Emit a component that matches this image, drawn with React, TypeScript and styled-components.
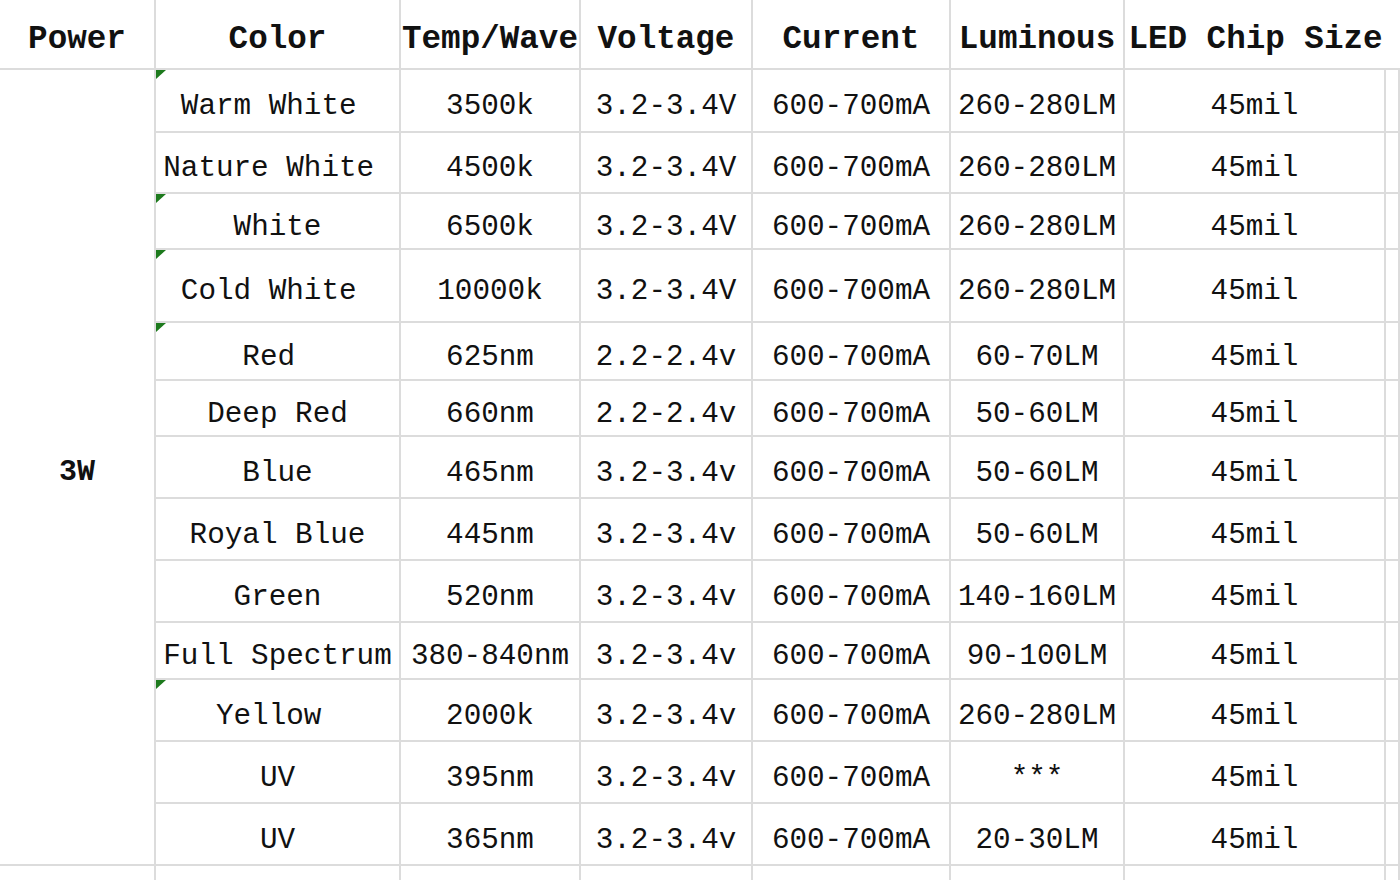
import React from "react";
import styled, { createGlobalStyle, css } from "styled-components";

const GlobalStyle = createGlobalStyle`
  html, body {
    margin: 0;
    padding: 0;
    background: #ffffff;
    overflow: hidden;
  }
  body {
    font-family: "Liberation Mono", "DejaVu Sans Mono", monospace;
    color: #111111;
  }
`;

const LINE = "#dcdcdc";

const COLS = [156, 245, 180, 172, 198, 174, 261, 14];
const BODY_ROWS = [63, 61, 56, 73, 58, 56, 62, 62, 62, 57, 62, 62, 62];

const Sheet = styled.div<{ $rows: string }>`
  display: grid;
  grid-template-columns: ${COLS.map((c) => `${c}px`).join(" ")};
  grid-template-rows: ${(p) => p.$rows};
  width: 1400px;
  height: 880px;
  overflow: hidden;
  background: #ffffff;
`;

const cellBase = css`
  box-sizing: border-box;
  display: flex;
  align-items: center;
  justify-content: center;
  white-space: pre;
  position: relative;
`;

const HeaderCell = styled.div<{ $noRight?: boolean }>`
  ${cellBase}
  font-family: "Liberation Mono", "DejaVu Sans Mono", monospace;
  font-weight: 700;
  font-size: 32.6px;
  padding-top: 11px;
  border-bottom: 2px solid ${LINE};
  border-right: ${(p) => (p.$noRight ? "none" : `2px solid ${LINE}`)};
  overflow: visible;
  z-index: ${(p) => (p.$noRight ? 1 : 0)};
`;

const PowerCell = styled.div<{ $span: number }>`
  ${cellBase}
  grid-row: span ${(p) => p.$span};
  font-family: "Liberation Mono", "DejaVu Sans Mono", monospace;
  font-weight: 700;
  font-size: 30px;
  padding-top: 10px;
  border-right: 2px solid ${LINE};
  border-bottom: 2px solid ${LINE};
`;

const Cell = styled.div<{ $flag?: boolean; $last?: boolean }>`
  ${cellBase}
  font-size: 29.3px;
  padding-top: 12px;
  border-right: 2px solid ${LINE};
  border-bottom: ${(p) => (p.$last ? "none" : `2px solid ${LINE}`)};

  ${(p) =>
    p.$flag &&
    css`
      &::before {
        content: "";
        position: absolute;
        left: 0;
        top: 0;
        width: 0;
        height: 0;
        border-top: 9px solid #1d7a1d;
        border-right: 10px solid transparent;
      }
    `}
`;

type Row = {
  color: string;
  temp: string;
  voltage: string;
  current: string;
  lum: string;
  chip: string;
  flag?: boolean;
};

const rows: Row[] = [
  { color: "Warm White ", temp: "3500k", voltage: "3.2-3.4V", current: "600-700mA", lum: "260-280LM", chip: "45mil", flag: true },
  { color: "Nature White ", temp: "4500k", voltage: "3.2-3.4V", current: "600-700mA", lum: "260-280LM", chip: "45mil" },
  { color: "White", temp: "6500k", voltage: "3.2-3.4V", current: "600-700mA", lum: "260-280LM", chip: "45mil", flag: true },
  { color: "Cold White ", temp: "10000k", voltage: "3.2-3.4V", current: "600-700mA", lum: "260-280LM", chip: "45mil", flag: true },
  { color: "Red ", temp: "625nm", voltage: "2.2-2.4v", current: "600-700mA", lum: "60-70LM", chip: "45mil", flag: true },
  { color: "Deep Red", temp: "660nm", voltage: "2.2-2.4v", current: "600-700mA", lum: "50-60LM", chip: "45mil" },
  { color: "Blue", temp: "465nm", voltage: "3.2-3.4v", current: "600-700mA", lum: "50-60LM", chip: "45mil" },
  { color: "Royal Blue", temp: "445nm", voltage: "3.2-3.4v", current: "600-700mA", lum: "50-60LM", chip: "45mil" },
  { color: "Green", temp: "520nm", voltage: "3.2-3.4v", current: "600-700mA", lum: "140-160LM", chip: "45mil" },
  { color: "Full Spectrum", temp: "380-840nm", voltage: "3.2-3.4v", current: "600-700mA", lum: "90-100LM", chip: "45mil" },
  { color: "Yellow ", temp: "2000k", voltage: "3.2-3.4v", current: "600-700mA", lum: "260-280LM", chip: "45mil", flag: true },
  { color: "UV", temp: "395nm", voltage: "3.2-3.4v", current: "600-700mA", lum: "***", chip: "45mil" },
  { color: "UV", temp: "365nm", voltage: "3.2-3.4v", current: "600-700mA", lum: "20-30LM", chip: "45mil" },
];

const headers = ["Power", "Color", "Temp/Wave", "Voltage", "Current", "Luminous", "LED Chip Size"];

export default function App() {
  const rowTemplate = ["70px", ...BODY_ROWS.map((r) => `${r}px`), "40px"].join(" ");
  return (
    <>
      <GlobalStyle />
      <Sheet $rows={rowTemplate}>
        {headers.map((h, i) => (
          <HeaderCell key={h} $noRight={i === 6}>
            {h}
          </HeaderCell>
        ))}
        <HeaderCell $noRight />

        {rows.map((r, i) => (
          <React.Fragment key={i}>
            {i === 0 && <PowerCell $span={rows.length}>3W</PowerCell>}
            <Cell $flag={r.flag}>{r.color}</Cell>
            <Cell>{r.temp}</Cell>
            <Cell>{r.voltage}</Cell>
            <Cell>{r.current}</Cell>
            <Cell>{r.lum}</Cell>
            <Cell>{r.chip}</Cell>
            <Cell />
          </React.Fragment>
        ))}

        {COLS.map((_, i) => (
          <Cell key={`tail-${i}`} $last />
        ))}
      </Sheet>
    </>
  );
}
